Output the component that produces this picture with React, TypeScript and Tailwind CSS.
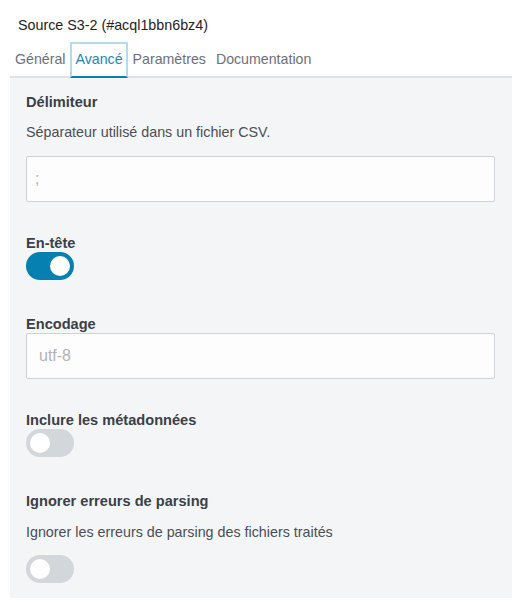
import type { ReactNode } from 'react';

const tabs = ['Général', 'Avancé', 'Paramètres', 'Documentation'];

function Toggle({ on }: { on: boolean }) {
  return (
    <div
      className={`relative flex h-7 w-12 items-center rounded-full px-1 ${
        on ? 'justify-end bg-[#0680b0]' : 'justify-start bg-[#d3d6db]'
      }`}
    >
      <div className="h-5 w-5 rounded-full bg-white" />
    </div>
  );
}

function Label({ children, tight }: { children: ReactNode; tight?: boolean }) {
  return (
    <div className={`text-[14.6px] font-bold text-[#3b3f46] ${tight ? 'leading-[18px]' : 'leading-5'}`}>{children}</div>
  );
}

function Hint({ children }: { children: ReactNode }) {
  return <div className="text-[14.3px] leading-5 text-[#4b4e54]">{children}</div>;
}

export default function App() {
  return (
    <div className="h-[608px] w-[518px] bg-white pt-[15px] font-['Liberation_Sans',Arial,sans-serif]">
      <div className="pl-[18px] text-[14.3px] leading-5 text-[#1f2226]">Source S3-2 (#acql1bbn6bz4)</div>

      <div className="ml-[10px] mt-[7px] flex w-[502px] border-b-2 border-[#dfe2e7]">
        {tabs.map((tab) => {
          const active = tab === 'Avancé';
          return (
            <div
              key={tab}
              className={`-mb-[2px] h-[36px] border-2 px-[3px] pt-[5px] text-[14.2px] leading-5 ${
                active
                  ? 'border-[#b5dbe8] border-b-[#0a7fb0] text-[#1b86b9]'
                  : 'border-transparent text-[#6d707a]'
              }`}
            >
              {tab}
            </div>
          );
        })}
      </div>

      <div className="ml-[10px] h-[520px] w-[502px] bg-[#f4f5f7] px-4 pt-[14px]">
        <Label>Délimiteur</Label>
        <div className="mt-[10px]">
          <Hint>Séparateur utilisé dans un fichier CSV.</Hint>
        </div>
        <div className="mt-[14px] flex h-[46px] w-[469px] items-center rounded-[2px] border border-[#cfd2d6] bg-[#fdfdfd] pl-[8px] text-[16px] text-[#b3b3b3]">
          ;
        </div>

        <div className="mt-[32px]">
          <Label tight>En-tête</Label>
          <Toggle on />
        </div>

        <div className="mt-[35px]">
          <Label tight>Encodage</Label>
          <div className="flex h-[46px] w-[469px] items-center rounded-[2px] border border-[#cfd2d6] bg-[#fdfdfd] pl-[12px] text-[16px] text-[#b3b3b3]">
            utf-8
          </div>
        </div>

        <div className="mt-[32px]">
          <Label tight>Inclure les métadonnées</Label>
          <Toggle on={false} />
        </div>

        <div className="mt-[34px]">
          <Label>Ignorer erreurs de parsing</Label>
          <div className="mt-[11px]">
            <Hint>Ignorer les erreurs de parsing des fichiers traités</Hint>
          </div>
          <div className="mt-[13px]">
            <Toggle on={false} />
          </div>
        </div>
      </div>
    </div>
  );
}
